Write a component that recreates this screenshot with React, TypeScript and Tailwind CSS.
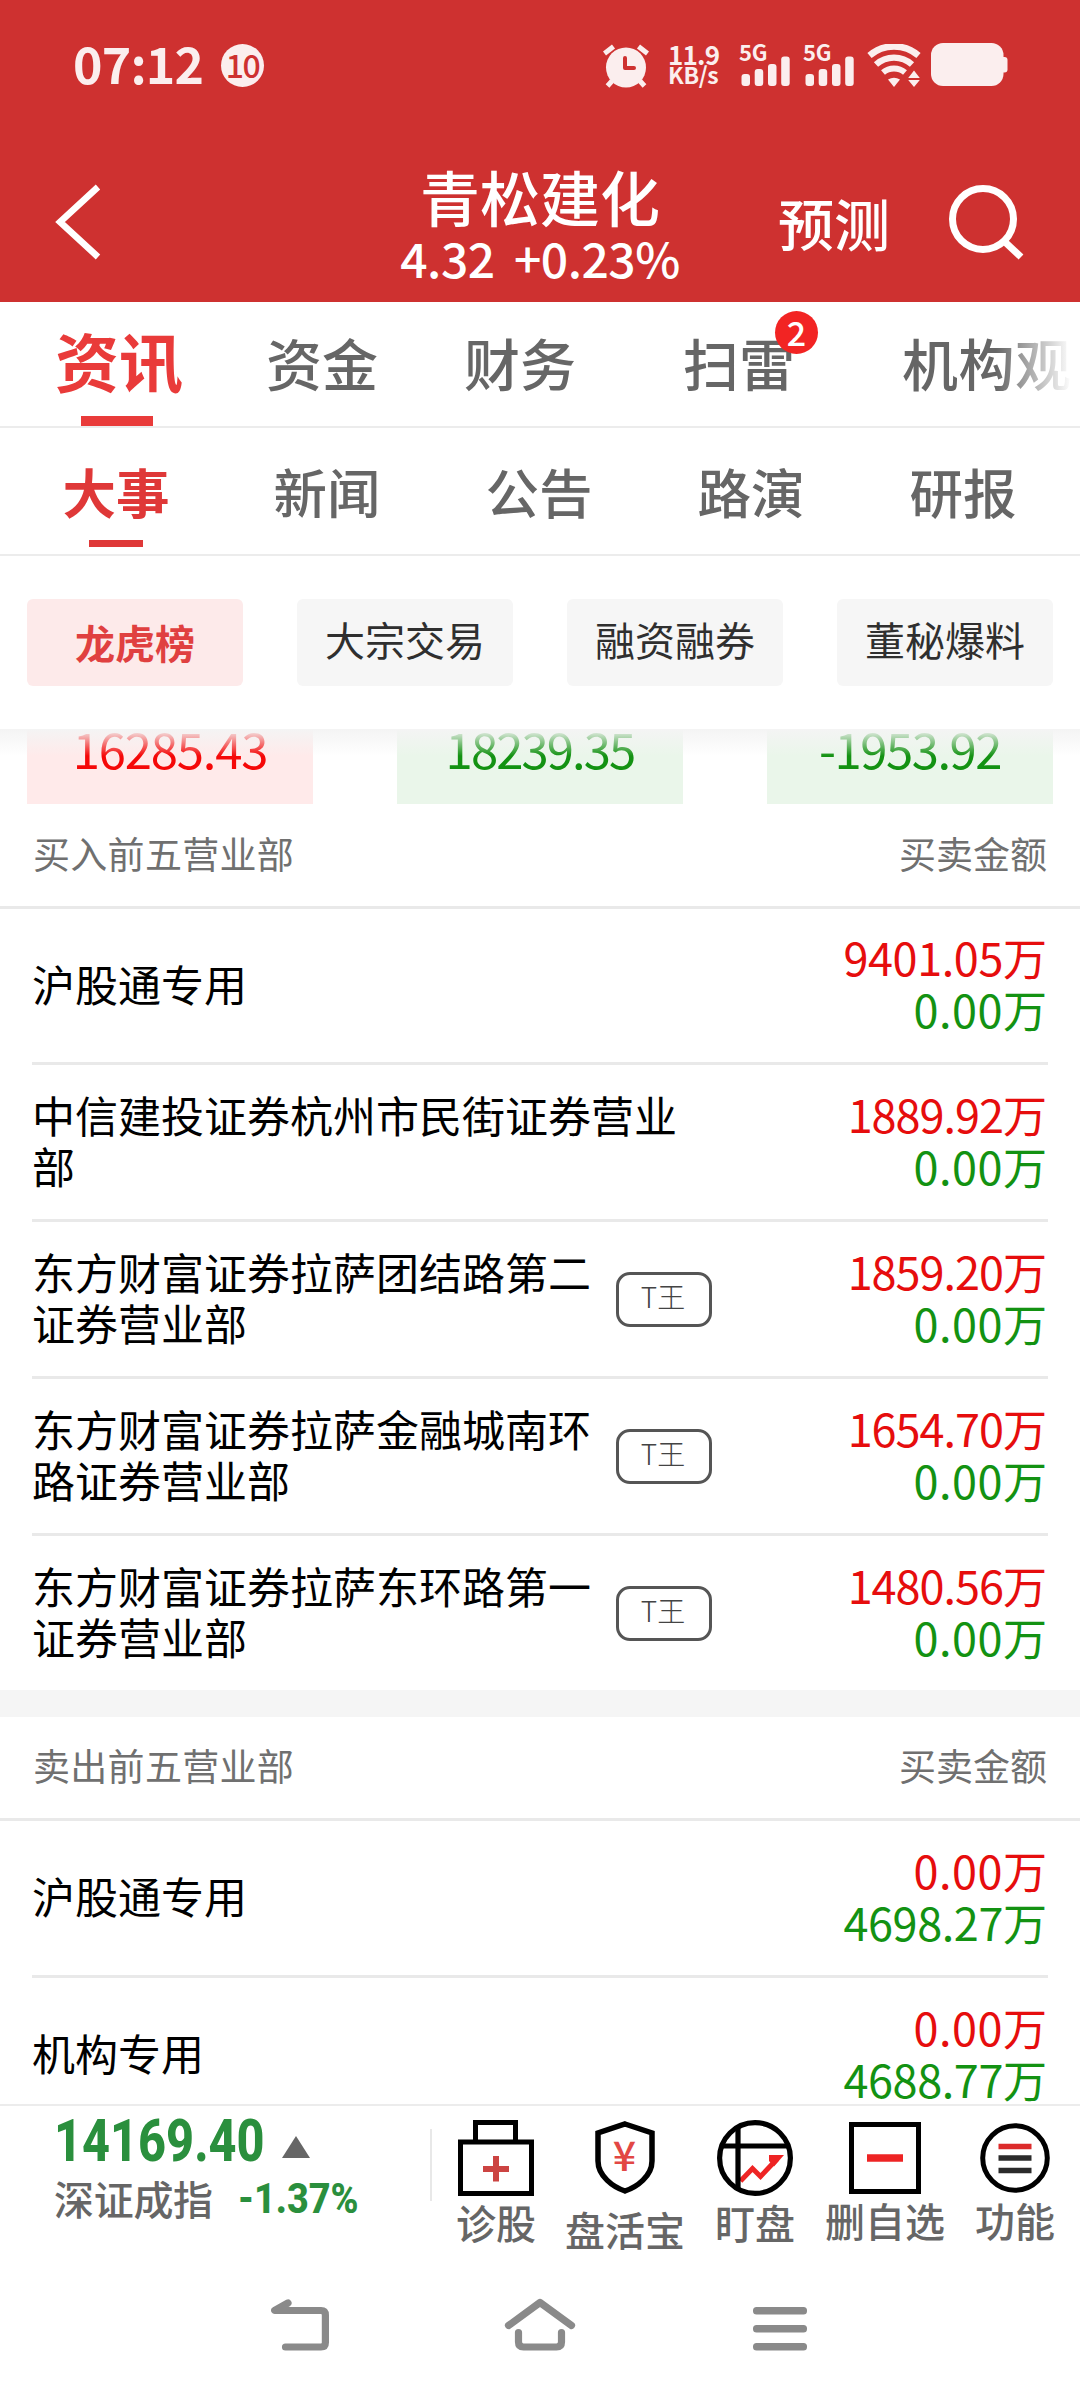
import React from 'react';

type Row = { name: string; tag?: string; buy: string; sell: string };

const buyRows: Row[] = [
  { name: '沪股通专用', buy: '9401.05', sell: '0.00' },
  { name: '中信建投证券杭州市民街证券营业部', buy: '1889.92', sell: '0.00' },
  { name: '东方财富证券拉萨团结路第二证券营业部', tag: 'T王', buy: '1859.20', sell: '0.00' },
  { name: '东方财富证券拉萨金融城南环路证券营业部', tag: 'T王', buy: '1654.70', sell: '0.00' },
  { name: '东方财富证券拉萨东环路第一证券营业部', tag: 'T王', buy: '1480.56', sell: '0.00' },
];

const sellRows: Row[] = [
  { name: '沪股通专用', buy: '0.00', sell: '4698.27' },
  { name: '机构专用', buy: '0.00', sell: '4688.77' },
];

function AlarmIcon() {
  return (
    <svg className="h-[44px] w-[46px] shrink-0" viewBox="0 0 46 44">
      <g stroke="#fbeeee" strokeLinecap="butt">
        <path d="M1.5 9.5 L10.5 2.5 M44.5 9.5 L35.5 2.5" strokeWidth="5" />
        <path d="M9 37 L4.500 42 M37 37 L41.500 42" strokeWidth="5" />
      </g>
      <circle cx="23" cy="23.500" r="20" fill="#fbeeee" />
      <path d="M22 14 V24 H31" fill="none" stroke="#ce3130" strokeWidth="4" strokeLinecap="round" strokeLinejoin="round" />
    </svg>
  );
}

function Signal() {
  return (
    <div className="relative h-[44px] w-[52px] shrink-0">
      <span className="absolute left-0 -top-[7px] text-[22px] leading-[30px] font-bold tracking-[-0.2px]">5G</span>
      <svg className="block h-[44px] w-[52px]" viewBox="0 0 52 44" fill="#fbeeee">
        <rect x="2.500" y="31" width="8.500" height="12" rx="3" />
        <rect x="15.700" y="26" width="8.500" height="17" rx="3" />
        <rect x="29" y="21" width="8.500" height="22" rx="3" />
        <rect x="42.200" y="13.500" width="8.500" height="29.500" rx="3" />
      </svg>
    </div>
  );
}

function WifiIcon() {
  return (
    <svg className="h-[44px] w-[54px] shrink-0" viewBox="0 0 54 44">
      <g fill="none" stroke="#fbeeee">
        <path d="M2.500 11.500 A37.500 37.500 0 0 1 51.500 11.500" strokeWidth="6.500" />
        <path d="M9 20.500 A27 27 0 0 1 45 20.500" strokeWidth="6.300" />
        <path d="M16 28.500 A17 17 0 0 1 38 28.500" strokeWidth="6" />
      </g>
      <path d="M21 35.500 Q27 32 33 35.500 L27 43Z" fill="#fbeeee" />
      <path d="M47 26.500 L52.800 34 H41.200Z M41.200 36 H52.800 L47 43Z" fill="#fbeeee" />
    </svg>
  );
}

function BatteryIcon() {
  return (
    <svg className="h-[43px] w-[77px] shrink-0" viewBox="0 0 77 43" fill="#fbeeee">
      <rect width="72.500" height="43" rx="12" />
      <rect x="68" y="14" width="8.500" height="15.500" rx="3" />
    </svg>
  );
}

function StatusBar() {
  return (
    <div className="flex h-[130px] items-start pt-[43px] pl-[73px] text-[#fbeeee]">
      <span className="mt-[-17px] w-[148px] text-[50px] leading-[72px] font-bold tracking-[-0.8px] whitespace-nowrap">07:12</span>
      <span className="mt-px flex h-[43px] w-[43px] items-center justify-center rounded-full bg-[#fbeeee] pb-[4px] text-[32px] leading-none font-medium tracking-[-1.500px] text-[#ce3130]">
        10
      </span>
      <div className="ml-[339px] mt-px"><AlarmIcon /></div>
      <div className="ml-[19px] w-[51px] text-[26px] leading-[21px] font-bold whitespace-nowrap">
        <div className="tracking-[-0.8px]">11.9</div>
        <div className="text-[23px] tracking-[-0.4px]">KB/s</div>
      </div>
      <div className="ml-[20px]"><Signal /></div>
      <div className="ml-[12px]"><Signal /></div>
      <div className="ml-[12px] mt-px"><WifiIcon /></div>
      <div className="ml-[10px]"><BatteryIcon /></div>
    </div>
  );
}

function Header() {
  return (
    <header className="h-[302px] bg-[#ce3130] text-white">
      <StatusBar />
      <div className="flex h-[172px]">
        <svg className="mt-[52px] ml-[55px] h-[80px] w-[48px]" viewBox="0 0 48 80" fill="none" stroke="#fff" strokeWidth="6.500">
          <path d="M43 5 L5 40 L43 75" />
        </svg>
        <div className="ml-[257px] flex w-[360px] flex-col items-center">
          <div className="mt-[34px] text-[60px] leading-[63px] font-medium whitespace-nowrap">青松建化</div>
          <div className="mt-[-1px] text-[48px] leading-[62px] font-medium tracking-[-0.5px] whitespace-nowrap [word-spacing:9px]">4.32 +0.23%</div>
        </div>
        <div className="mt-[62px] ml-[58px] text-[56px] leading-[60px] font-medium">预测</div>
        <svg className="mt-[54px] ml-[57px] h-[78px] w-[80px]" viewBox="0 0 80 78" fill="none" stroke="#fff" strokeWidth="7">
          <circle cx="36" cy="35" r="30.500" />
          <path d="M58 58 L74 73" />
        </svg>
      </div>
    </header>
  );
}

function MainTabs() {
  return (
    <nav className="relative flex h-[126px] overflow-hidden border-b-2 border-[#ececec] pl-[55px] text-[56px] leading-[119px] font-medium whitespace-nowrap text-[#666]">
      <div className="flex w-[128px] flex-col items-center text-[64px] leading-[114px] font-bold text-[#e93b3a]">
        资讯
        <div className="-ml-[4px] h-[10px] w-[72px] bg-[#e93b3a]" />
      </div>
      <div className="ml-[83px]">资金</div>
      <div className="ml-[86px]">财务</div>
      <div className="relative ml-[107px]">
        扫雷
        <span className="absolute top-[9px] left-[92px] flex h-[43px] w-[43px] items-center justify-center rounded-full bg-[#f22423] pb-[2px] text-[34px] leading-none text-white">
          2
        </span>
      </div>
      <div className="ml-[107px] tracking-[0.500px]">机构观</div>
      <div className="absolute top-0 right-0 h-[124px] w-[84px] bg-gradient-to-r from-white/0 to-white to-90%" />
    </nav>
  );
}

function SubTabs() {
  return (
    <nav className="grid h-[128px] grid-cols-5 border-b-2 border-[#ececec] px-[10px] text-center text-[53.500px] leading-[125px] font-medium text-[#666]">
      <div className="flex flex-col items-center font-bold text-[#df3838]">
        <div className="h-[112px]">大事</div>
        <div className="h-[7px] w-[54px] bg-[#df3838]" />
      </div>
      <div className="-ml-[2px]">新闻</div>
      <div className="-ml-[2px]">公告</div>
      <div className="-ml-[2px]">路演</div>
      <div className="-ml-[2px]">研报</div>
    </nav>
  );
}

function Filters() {
  return (
    <div className="relative z-10 flex h-[173px] gap-[54px] bg-white px-[27px] pt-[43px] text-[40px] leading-[80px] text-[#2f2f2f]">
      <div className="h-[87px] flex-1 rounded-[6px] bg-[#fdeaea] text-center leading-[86px] font-bold text-[#e04040]">龙虎榜</div>
      <div className="h-[87px] flex-1 rounded-[6px] bg-[#f6f6f6] text-center">大宗交易</div>
      <div className="h-[87px] flex-1 rounded-[6px] bg-[#f6f6f6] text-center">融资融券</div>
      <div className="h-[87px] flex-1 rounded-[6px] bg-[#f6f6f6] text-center">董秘爆料</div>
      <div className="absolute top-full left-0 h-[27px] w-full bg-gradient-to-b from-[#f4f4f4] to-white/0" />
    </div>
  );
}

function Totals() {
  return (
    <div className="flex h-[75px] gap-[84px] px-[27px] text-center text-[49px] leading-[37px] text-[#139212]">
      <div className="flex-1 bg-[#ffeaea] tracking-[-1.2px] text-[#f50808]">16285.43</div>
      <div className="flex-1 bg-[#eaf6ea] tracking-[-1.9px]">18239.35</div>
      <div className="flex-1 bg-[#eaf6ea] tracking-[-1.5px]">-1953.92</div>
    </div>
  );
}

function SectionHead({ title }: { title: string }) {
  return (
    <div className="flex h-[104px] shrink-0 justify-between border-b-[3px] border-[#e9e9e9] px-[33px] text-[37px] leading-[97px] text-[#707070]">
      <span className="tracking-[0.300px]">{title}</span>
      <span>买卖金额</span>
    </div>
  );
}

function Amount({ value }: { value: string }) {
  const spacing = value.startsWith('1') ? 'tracking-[-1px]' : value.startsWith('0') ? 'tracking-[0.500px]' : 'tracking-[-0.400px]';
  return (
    <div className="text-[44px] leading-[51px]">
      <span className={`text-[45px] leading-[51px] ${spacing}`}>{value}</span>
      <span>万</span>
    </div>
  );
}

function BrokerRow({ row }: { row: Row }) {
  return (
    <div className="mx-[32px] flex h-[157px] items-center border-b-[3px] border-[#e9e9e9] last:h-[154px] last:border-b-0">
      <div className={row.tag ? 'mb-[5px] w-[560px] text-[43px] leading-[51px] text-black' : 'mb-[5px] w-[646px] text-[43px] leading-[51px] text-black'}>
        {row.name}
      </div>
      {row.tag && (
        <div className="ml-[24px] h-[55px] w-[96px] rounded-[14px] border-[3px] border-[#555] pr-[2px] text-center text-[28px] leading-[43px] font-light text-[#444]">
          {row.tag}
        </div>
      )}
      <div className="mb-[5px] ml-auto pr-[1px] text-right whitespace-nowrap">
        <div className="text-[#e60d0d]"><Amount value={row.buy} /></div>
        <div className="text-[#139212]"><Amount value={row.sell} /></div>
      </div>
    </div>
  );
}

function DiagnoseIcon() {
  return (
    <svg className="h-[76px] w-[76px]" viewBox="0 0 76 76" fill="none" stroke="#000" strokeWidth="5">
      <rect x="2.500" y="22" width="71" height="51.500" />
      <path d="M17.500 22 V2.500 H57.500 V22" />
      <path d="M25 49 H51 M38 36 V61.500" stroke="#cc4442" strokeWidth="6" />
    </svg>
  );
}

function ShieldIcon() {
  return (
    <svg className="h-[74px] w-[60px]" viewBox="0 0 60 74">
      <path d="M30 4 L57 13 V41 C57 56 42 67 30 71 C18 67 3 56 3 41 V13Z" fill="none" stroke="#000" strokeWidth="5.500" />
      <text x="29.500" y="50.500" textAnchor="middle" fontSize="41" fontWeight="500" fill="#e24744">¥</text>
    </svg>
  );
}

function TrendIcon() {
  return (
    <svg className="h-[76px] w-[76px]" viewBox="0 0 76 76" fill="none" stroke="#000" strokeWidth="5.200">
      <path d="M23.500 61 L35.500 48.500 L43.500 56.500 L60 39" stroke="#ee2424" strokeWidth="5" />
      <path d="M52 35 H67 L57 46.500 L52 41Z" fill="#ee2424" stroke="none" />
      <circle cx="38" cy="38" r="35.400" />
      <path d="M21 8 V68 M6 26 H70" />
    </svg>
  );
}

function RemoveIcon() {
  return (
    <svg className="h-[72px] w-[72px]" viewBox="0 0 72 72" fill="none" stroke="#000" strokeWidth="5">
      <rect x="2.500" y="2.500" width="67" height="67" />
      <path d="M18 36 H54" stroke="#ee2424" strokeWidth="7.500" />
    </svg>
  );
}

function FunctionIcon() {
  return (
    <svg className="h-[70px] w-[70px]" viewBox="0 0 70 70" fill="none" stroke="#2b2b2b" strokeWidth="5.500">
      <circle cx="35" cy="35" r="32.300" stroke="#000" strokeWidth="5" />
      <path d="M18.500 23.500 H51.500" stroke="#dc2b2b" />
      <path d="M18.500 35 H51.500 M18.500 47.500 H51.500" />
    </svg>
  );
}

function BottomBar() {
  return (
    <footer className="relative z-10 h-[288px] bg-white">
      <div className="flex h-[156px] border-t-2 border-[#ececec] text-[40px] font-medium text-[#666]">
        <div className="w-[430px] shrink-0 pl-[54px]">
          <div className="mt-[6px] flex h-[57px]">
            <div className="w-[228px]">
              <span className="inline-block origin-left scale-x-[0.81] font-['Roboto'] text-[60px] leading-[58px] font-extrabold text-[#2a8f3d]">14169.40</span>
            </div>
            <svg className="mt-[24px] h-[22px] w-[28px]" viewBox="0 0 28 22" fill="#666"><path d="M14 0 L28 22 H0Z" /></svg>
          </div>
          <div className="mt-[3px] flex h-[52px] leading-[52px]">
            <span className="w-[184px] tracking-[-0.3px]">深证成指</span>
            <span className="mt-px inline-block origin-left scale-x-[0.9] font-['Roboto'] text-[42px] font-extrabold text-[#2a8f3d]">-1.37%</span>
          </div>
        </div>
        <div className="mt-[23px] h-[72px] w-[2px] shrink-0 bg-[#e8e8e8]" />
        <div className="ml-[24px] flex w-[80px] shrink-0 flex-col items-center pt-[14px] leading-[48px] whitespace-nowrap">
          <DiagnoseIcon />
          <span className="mt-[2px]">诊股</span>
        </div>
        <div className="ml-[29px] flex w-[120px] shrink-0 flex-col items-center pt-[14px] leading-[48px] whitespace-nowrap">
          <ShieldIcon />
          <span className="mt-[11px]">盘活宝</span>
        </div>
        <div className="ml-[30px] flex w-[80px] shrink-0 flex-col items-center pt-[14px] leading-[48px] whitespace-nowrap">
          <TrendIcon />
          <span className="mt-[2px]">盯盘</span>
        </div>
        <div className="ml-[30px] flex w-[120px] shrink-0 flex-col items-center pt-[16px] leading-[48px] whitespace-nowrap">
          <RemoveIcon />
          <span className="mt-[2px]">删自选</span>
        </div>
        <div className="ml-[30px] flex w-[80px] shrink-0 flex-col items-center pt-[17px] leading-[48px] whitespace-nowrap">
          <FunctionIcon />
          <span className="mt-[3px]">功能</span>
        </div>
      </div>
      <div className="flex h-[132px] pt-[36px] pl-[270px]">
        <svg className="h-[60px] w-[60px]" viewBox="0 0 60 60" fill="none" stroke="#8a8a8a" strokeWidth="7.200" strokeLinecap="round" strokeLinejoin="round">
          <path d="M18 7 L4.700 14.500 H51 Q55.400 14.500 55.400 19 V46.500 Q55.400 51 51 51 H15.500" />
        </svg>
        <svg className="ml-[173px] h-[60px] w-[74px]" viewBox="0 0 74 60" fill="none" stroke="#8a8a8a" strokeWidth="7.200" strokeLinecap="round" strokeLinejoin="round">
          <path d="M5.500 29.500 L37 6.500 L68.500 29.500" />
          <path d="M15.500 36.500 V46 Q15.500 51 20.500 51 H53.500 Q58.500 51 58.500 46 V36.500" />
        </svg>
        <svg className="ml-[174px] h-[60px] w-[58px]" viewBox="0 0 58 60" fill="#8a8a8a">
          <rect x="2" y="11" width="54" height="7.500" rx="3.500" />
          <rect x="2" y="29" width="54" height="7.500" rx="3.500" />
          <rect x="2" y="47" width="54" height="7.500" rx="3.500" />
        </svg>
      </div>
    </footer>
  );
}

export default function App() {
  return (
    <div className="flex h-[2392px] w-[1080px] flex-col overflow-hidden bg-white font-['Noto_Sans_CJK_SC',sans-serif]">
      <Header />
      <MainTabs />
      <SubTabs />
      <Filters />
      <main className="h-[1375px] overflow-hidden">
        <Totals />
        <div className="pt-px">
          <SectionHead title="买入前五营业部" />
        </div>
        <section className="[&>:first-child]:h-[156px]">
          {buyRows.map((r) => <BrokerRow key={r.name} row={r} />)}
        </section>
        <div className="h-[27px] bg-[#f5f5f5]" />
        <SectionHead title="卖出前五营业部" />
        <section>
          {sellRows.map((r) => <BrokerRow key={r.name} row={r} />)}
        </section>
      </main>
      <BottomBar />
    </div>
  );
}
